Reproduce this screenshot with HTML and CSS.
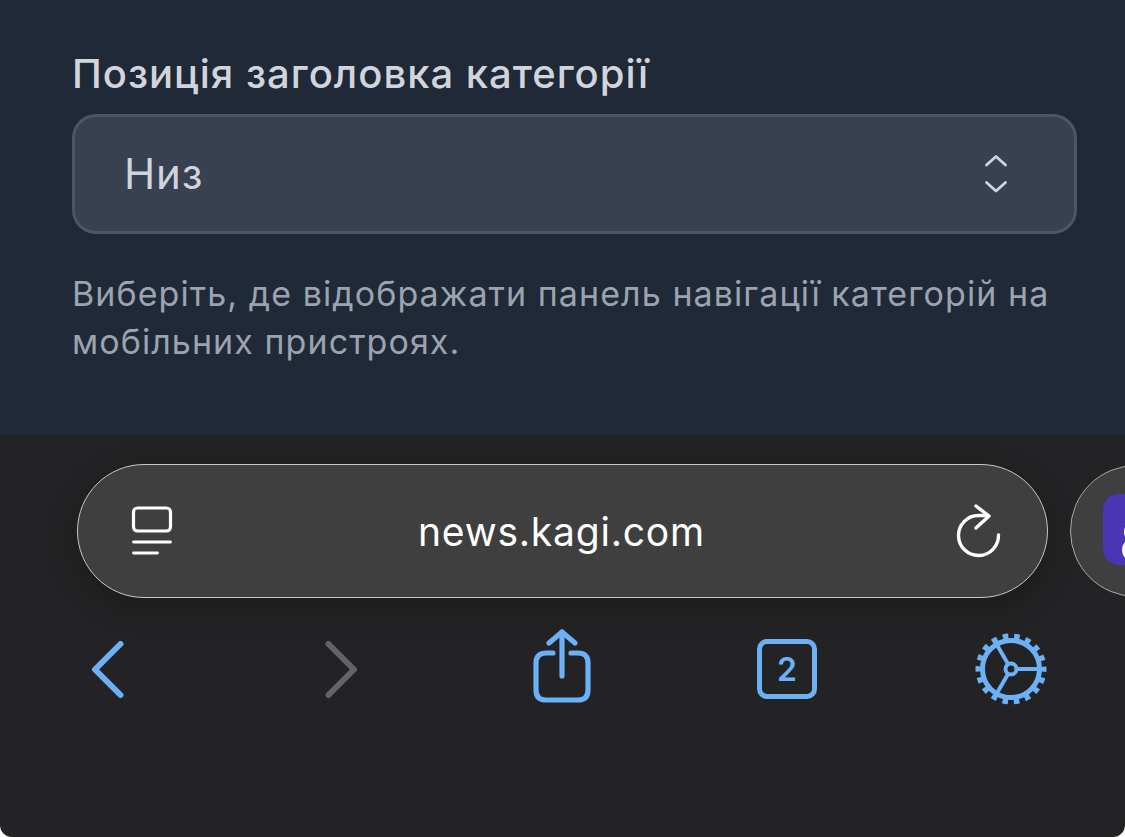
FILE: index.html
```html
<!doctype html>
<html>
<head>
<meta charset="UTF-8">
<title>news.kagi.com</title>
<link rel="stylesheet" href="styles.css">
</head>
<body>
<div class="settings">
	<label class="field-label">Позиція заголовка категорії</label>
	<div class="select-box">
		<span class="select-value">Низ</span>
		<svg class="select-arrows" width="24" height="40" viewBox="0 0 24 40" fill="none" stroke="#d1d5db" stroke-width="2.8" stroke-linecap="round" stroke-linejoin="round">
			<path d="M2.500 11 12 2.500l9.500 8.500"/>
			<path d="M2.500 28.500l9.500 8.500 9.500-8.500"/>
		</svg>
	</div>
	<p class="field-help">Виберіть, де відображати панель навігації категорій на мобільних пристроях.</p>
</div>
<div class="browser">
	<div class="tab-row">
		<div class="url-pill">
			<svg class="reader-ico" width="42" height="50" viewBox="0 0 42 50" fill="none" stroke="#fff" stroke-linecap="round">
				<rect x="2.500" y="2" width="37" height="23" rx="4" stroke-width="3.200"/>
				<path d="M2.500 36h37" stroke-width="2.800"/>
				<path d="M2.500 47h24" stroke-width="2.800"/>
			</svg>
			<span class="url-text">news.kagi.com</span>
			<svg class="reload-ico" width="46" height="54" viewBox="0 0 46 54" fill="none" stroke="#fff" stroke-width="3.400" stroke-linecap="round" stroke-linejoin="round">
				<path d="M42.500 31A20 20 0 1 1 22.500 11.500h9"/>
				<path d="M20 2l13 10L20 24"/>
			</svg>
		</div>
		<div class="next-pill">
			<div class="app-ico">
				<svg class="app-glyph" width="40" height="50" viewBox="0 0 40 50" fill="#fff">
					<circle cx="14" cy="12" r="11"/>
					<circle cx="14" cy="30" r="13"/>
				</svg>
			</div>
		</div>
	</div>
	<div class="toolbar">
		<svg class="tool back" width="34" height="58" viewBox="0 0 34 58" fill="none" stroke="#6cb0f5" stroke-width="6" stroke-linecap="round" stroke-linejoin="round">
			<path d="M29.500 3 4 28.500 29.500 54"/>
		</svg>
		<svg class="tool forward" width="34" height="58" viewBox="0 0 34 58" fill="none" stroke="#636366" stroke-width="6" stroke-linecap="round" stroke-linejoin="round">
			<path d="M4.500 3 30 28.500 4.500 54"/>
		</svg>
		<svg class="tool share" width="58" height="74" viewBox="0 0 58 74" fill="none" stroke="#6cb0f5" stroke-width="5.200" stroke-linecap="round" stroke-linejoin="round">
			<path d="M20 24h-7C6.500 24 3 27.500 3 34v27c0 6.500 3.500 10 10 10h32c6.500 0 10-3.500 10-10V34c0-6.500-3.500-10-10-10h-7"/>
			<path d="M29 47V3"/>
			<path d="M16 14 29 3l13 11"/>
		</svg>
		<div class="tool tabs-btn">2</div>
		<svg class="tool gear" width="72" height="72" viewBox="0 0 72 72" fill="none" stroke="#6cb0f5">
			<circle cx="36" cy="36" r="32" stroke-width="7" stroke-dasharray="5.400 5.770" stroke-dashoffset="2.700"/>
			<circle cx="36" cy="36" r="28.500" stroke-width="5"/>
			<circle cx="36" cy="36" r="5.500" stroke-width="4"/>
			<path d="M41.500 36H64M33.200 31.200 22 12M33.200 40.800 22 60" stroke-width="4"/>
		</svg>
	</div>
</div>
</body>
</html>
```

FILE: styles.css
```css
*{margin:0;padding:0;box-sizing:border-box;}
html,body{height:100%;}
body{width:1125px;height:837px;overflow:hidden;background:#fff;font-family:"Inter","Liberation Sans",sans-serif;display:flex;flex-direction:column;}

.settings{height:435px;background:#1f2937;padding:50px 48px 0 72px;}
.field-label{display:block;font-size:40px;line-height:48px;font-weight:500;color:#d1d5db;letter-spacing:1px;white-space:nowrap;}
.select-box{margin-top:16px;height:120px;background:#374151;border:3px solid #4b5563;border-radius:24px;display:flex;align-items:center;justify-content:space-between;padding:0 66px 0 49px;}
.select-value{font-size:42px;line-height:48px;color:#d1d5db;letter-spacing:0.8px;}
.select-arrows{display:block;}
.field-help{margin-top:36px;font-size:34px;line-height:48px;color:#9ca3af;letter-spacing:1.07px;width:1000px;}

.browser{flex:1;background:#232325;border-radius:0 0 12px 12px;overflow:hidden;}
.tab-row{display:flex;align-items:center;gap:22px;padding:29px 0 0 77px;}
.url-pill{flex:none;width:971px;height:134px;background:#3f3f3f;border:1.500px solid #c8c8c8;border-radius:67px;box-shadow:0 8px 30px rgba(0,0,0,0.25);display:flex;align-items:center;justify-content:space-between;padding:0 45px 0 53px;}
.url-text{font-size:39px;color:#fff;letter-spacing:0.8px;margin-right:6px;}
.next-pill{flex:none;width:200px;height:132px;background:#3f3f3f;border:1.500px solid #a8a8a8;border-radius:66px;padding:28px 0 0 32px;}
.app-ico{width:80px;height:71px;background:#4a35b5;border-radius:16px;overflow:hidden;padding:26px 0 0 18px;}
.app-glyph{display:block;}

.toolbar{display:flex;align-items:center;padding:34px 0 0 91px;height:110px;}
.tool{flex:none;display:block;}
.forward{margin-left:199px;}
.share{margin-left:175px;margin-top:-8px;}
.tabs-btn{margin-left:166px;margin-top:-2px;width:60px;height:60px;border:5.500px solid #6cb0f5;border-radius:10px;color:#6cb0f5;font-size:32px;font-weight:600;display:flex;align-items:center;justify-content:center;}
.gear{margin-left:158px;margin-top:-2px;}
```
